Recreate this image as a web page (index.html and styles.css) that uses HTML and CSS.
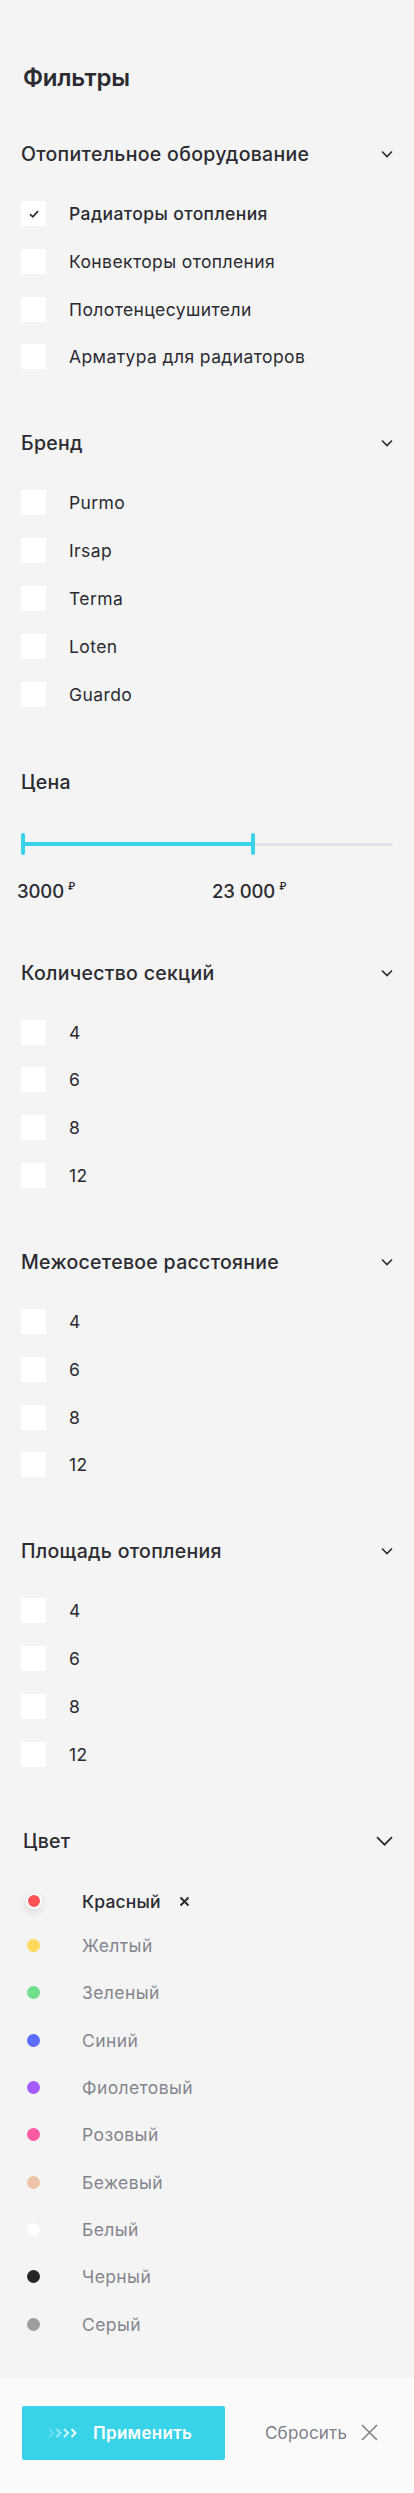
FILE: index.html
```html
<!DOCTYPE html>
<html lang="ru">
<head>
<meta charset="utf-8">
<title>Фильтры</title>
<link rel="stylesheet" href="styles.css">
</head>
<body>
<div class="page">
  <main class="panel">
    <h1 class="title">Фильтры</h1>

    <section class="group">
      <div class="group-head"><span>Отопительное оборудование</span>
        <svg class="chev" width="12" height="8" viewBox="0 0 12 8"><path d="M1 1.5l5 5 5-5" fill="none" stroke="#2b2b31" stroke-width="1.6"/></svg></div>
      <ul class="checks">
        <li class="check on"><span class="box"><svg width="10" height="8" viewBox="0 0 10 8"><path d="M1 4.2l2.8 2.6L9 1.2" fill="none" stroke="#2b2b31" stroke-width="1.7"/></svg></span>Радиаторы отопления</li>
        <li class="check"><span class="box"></span>Конвекторы отопления</li>
        <li class="check"><span class="box"></span>Полотенцесушители</li>
        <li class="check"><span class="box"></span>Арматура для радиаторов</li>
      </ul>
    </section>

    <section class="group">
      <div class="group-head"><span>Бренд</span>
        <svg class="chev" width="12" height="8" viewBox="0 0 12 8"><path d="M1 1.5l5 5 5-5" fill="none" stroke="#2b2b31" stroke-width="1.6"/></svg></div>
      <ul class="checks">
        <li class="check"><span class="box"></span>Purmo</li>
        <li class="check"><span class="box"></span>Irsap</li>
        <li class="check"><span class="box"></span>Terma</li>
        <li class="check"><span class="box"></span>Loten</li>
        <li class="check"><span class="box"></span>Guardo</li>
      </ul>
    </section>

    <section class="group group-price">
      <div class="group-head"><span>Цена</span></div>
      <div class="slider">
        <div class="track"></div>
        <div class="fill" style="width: 232px"></div>
        <span class="handle" style="left: 0px"></span>
        <span class="handle" style="left: 230px"></span>
      </div>
      <div class="prices">
        <span class="price" style="left: -4px">3000<sup>₽</sup></span>
        <span class="price" style="left: 191px">23&nbsp;000<sup>₽</sup></span>
      </div>
    </section>

    <section class="group">
      <div class="group-head"><span>Количество секций</span>
        <svg class="chev" width="12" height="8" viewBox="0 0 12 8"><path d="M1 1.5l5 5 5-5" fill="none" stroke="#2b2b31" stroke-width="1.6"/></svg></div>
      <ul class="checks">
        <li class="check"><span class="box"></span>4</li>
        <li class="check"><span class="box"></span>6</li>
        <li class="check"><span class="box"></span>8</li>
        <li class="check"><span class="box"></span>12</li>
      </ul>
    </section>

    <section class="group">
      <div class="group-head"><span>Межосетевое расстояние</span>
        <svg class="chev" width="12" height="8" viewBox="0 0 12 8"><path d="M1 1.5l5 5 5-5" fill="none" stroke="#2b2b31" stroke-width="1.6"/></svg></div>
      <ul class="checks">
        <li class="check"><span class="box"></span>4</li>
        <li class="check"><span class="box"></span>6</li>
        <li class="check"><span class="box"></span>8</li>
        <li class="check"><span class="box"></span>12</li>
      </ul>
    </section>

    <section class="group">
      <div class="group-head"><span>Площадь отопления</span>
        <svg class="chev" width="12" height="8" viewBox="0 0 12 8"><path d="M1 1.5l5 5 5-5" fill="none" stroke="#2b2b31" stroke-width="1.6"/></svg></div>
      <ul class="checks">
        <li class="check"><span class="box"></span>4</li>
        <li class="check"><span class="box"></span>6</li>
        <li class="check"><span class="box"></span>8</li>
        <li class="check"><span class="box"></span>12</li>
      </ul>
    </section>

    <section class="group group-color">
      <div class="group-head"><span>Цвет</span>
        <svg class="chev chev-big" width="17" height="10" viewBox="0 0 17 10"><path d="M1 1.2l7.5 7.5 7.5-7.5" fill="none" stroke="#2b2b31" stroke-width="1.7"/></svg></div>
      <ul class="colors">
        <li class="color on"><span class="dot" style="background:#ff5252"></span>Красный
          <svg class="remove" width="11" height="11" viewBox="0 0 11 11"><path d="M1.5 1.5l8 8M9.5 1.5l-8 8" stroke="#2b2b31" stroke-width="2"/></svg></li>
        <li class="color"><span class="dot" style="background:#ffd95c"></span>Желтый</li>
        <li class="color"><span class="dot" style="background:#70df8e"></span>Зеленый</li>
        <li class="color"><span class="dot" style="background:#5b6cff"></span>Синий</li>
        <li class="color"><span class="dot" style="background:#a55cff"></span>Фиолетовый</li>
        <li class="color"><span class="dot" style="background:#ff5aa2"></span>Розовый</li>
        <li class="color"><span class="dot" style="background:#efc3a8"></span>Бежевый</li>
        <li class="color"><span class="dot" style="background:#ffffff"></span>Белый</li>
        <li class="color"><span class="dot" style="background:#262628"></span>Черный</li>
        <li class="color"><span class="dot" style="background:#9e9e9e"></span>Серый</li>
      </ul>
    </section>
  </main>

  <footer class="actions">
    <button class="apply" type="button">
      <svg class="arrows" width="30" height="10" viewBox="0 0 30 10">
        <path d="M1 1l4 4-4 4" fill="none" stroke="#fff" stroke-opacity="0.25" stroke-width="1.8"/>
        <path d="M8.5 1l4 4-4 4" fill="none" stroke="#fff" stroke-opacity="0.5" stroke-width="1.8"/>
        <path d="M16 1l4 4-4 4" fill="none" stroke="#fff" stroke-opacity="0.8" stroke-width="1.8"/>
        <path d="M23.5 1l4 4-4 4" fill="none" stroke="#fff" stroke-width="1.8"/>
      </svg>
      <span>Применить</span>
    </button>
    <button class="reset" type="button">
      <span>Сбросить</span>
      <svg width="17" height="17" viewBox="0 0 17 17"><path d="M1 1l15 15M16 1L1 16" stroke="#7e7e88" stroke-width="1.5"/></svg>
    </button>
  </footer>
</div>
</body>
</html>
```
FILE: styles.css
```css
* { box-sizing: border-box; }
html, body { margin: 0; padding: 0; }
body {
  font-family: Inter, "Noto Sans", sans-serif;
  color: #2b2b31;
  background: #fafafa;
}
.page { width: 414px; }
.panel {
  background: #f4f4f4;
  padding: 63px 21px 41px 21px;
  display: flex;
  flex-direction: column;
}
.title {
  margin: 0 0 49px 2px;
  font-size: 24px;
  line-height: 30px;
  font-weight: 600;
  letter-spacing: -0.2px;
}
.group { display: flex; flex-direction: column; margin-bottom: 62px; }
.group:last-child { margin-bottom: 0; }
.group-head {
  display: flex;
  justify-content: space-between;
  align-items: center;
  height: 24px;
  font-size: 19.5px;
  font-weight: 500;
  letter-spacing: 0.3px;
}
.checks, .colors { list-style: none; margin: 35px 0 0 0; padding: 0; display: flex; flex-direction: column; gap: 22.8px; }
.check {
  display: flex;
  align-items: center;
  height: 25px;
  font-size: 17.5px;
  letter-spacing: 0.4px;
  color: #2b2b31;
}
.check.on { font-weight: 500; }
.box {
  width: 25px; height: 25px;
  background: #fff;
  margin-right: 23px;
  display: flex; align-items: center; justify-content: center;
  flex: none;
}
.slider { position: relative; height: 22px; margin-top: 39px; }
.track { position: absolute; left: 0; right: 0; top: 10px; height: 3px; background: #e2e3e7; border-radius: 2px; }
.fill { position: absolute; left: 0; top: 9px; height: 4px; background: #38d3e8; }
.handle { position: absolute; top: 0; width: 4px; height: 22px; border-radius: 2px; background: #38d3e8; }
.prices { position: relative; height: 24px; margin-top: 19px; }
.group-price { margin-top: 1px; margin-bottom: 63px; }
.price {
  position: absolute; top: 0;
  font-size: 18.5px; line-height: 24px; font-weight: 500;
  letter-spacing: -0.1px;
}
.price sup { font-size: 10px; font-weight: 600; vertical-align: 8px; margin-left: 4px; }
.group-color .group-head { padding-left: 2px; }
.colors { margin-top: 36px; gap: 22.4px; }
.color {
  display: flex; align-items: center; height: 25px;
  font-size: 17.5px; letter-spacing: 0.4px; color: #85858f;
}
.color.on { color: #2b2b31; font-weight: 500; margin-bottom: -3.4px; letter-spacing: 0.2px; }
.dot {
  width: 13px; height: 13px; border-radius: 50%;
  margin: 0 42px 0 6px;
  flex: none;
}
.color.on .dot {
  width: 16px; height: 16px;
  margin: 0 40.5px 0 4.5px;
  border: 2px solid #fff;
  box-shadow: 0 3px 8px rgba(0,0,0,0.12);
}
.remove { margin-left: 18px; }
.actions {
  background: #fafafa;
  height: 115px;
  padding: 28px 22px 0 22px;
  display: flex;
  align-items: flex-start;
}
.apply {
  width: 203px; height: 54px;
  background: #38d3e8;
  border: 0; border-radius: 2px;
  display: flex; align-items: center;
  padding: 0 0 0 26px;
  color: #fff;
  font-family: inherit;
  font-size: 17px; font-weight: 600;
  letter-spacing: 0.3px;
}
.arrows { margin-right: 15px; }
.reset {
  margin-left: 40px;
  height: 54px;
  background: none; border: 0; padding: 0;
  display: flex; align-items: center;
  font-family: inherit; font-size: 17px; letter-spacing: 0.2px; color: #7e7e88;
}
.reset svg { margin-left: 14px; }
```
